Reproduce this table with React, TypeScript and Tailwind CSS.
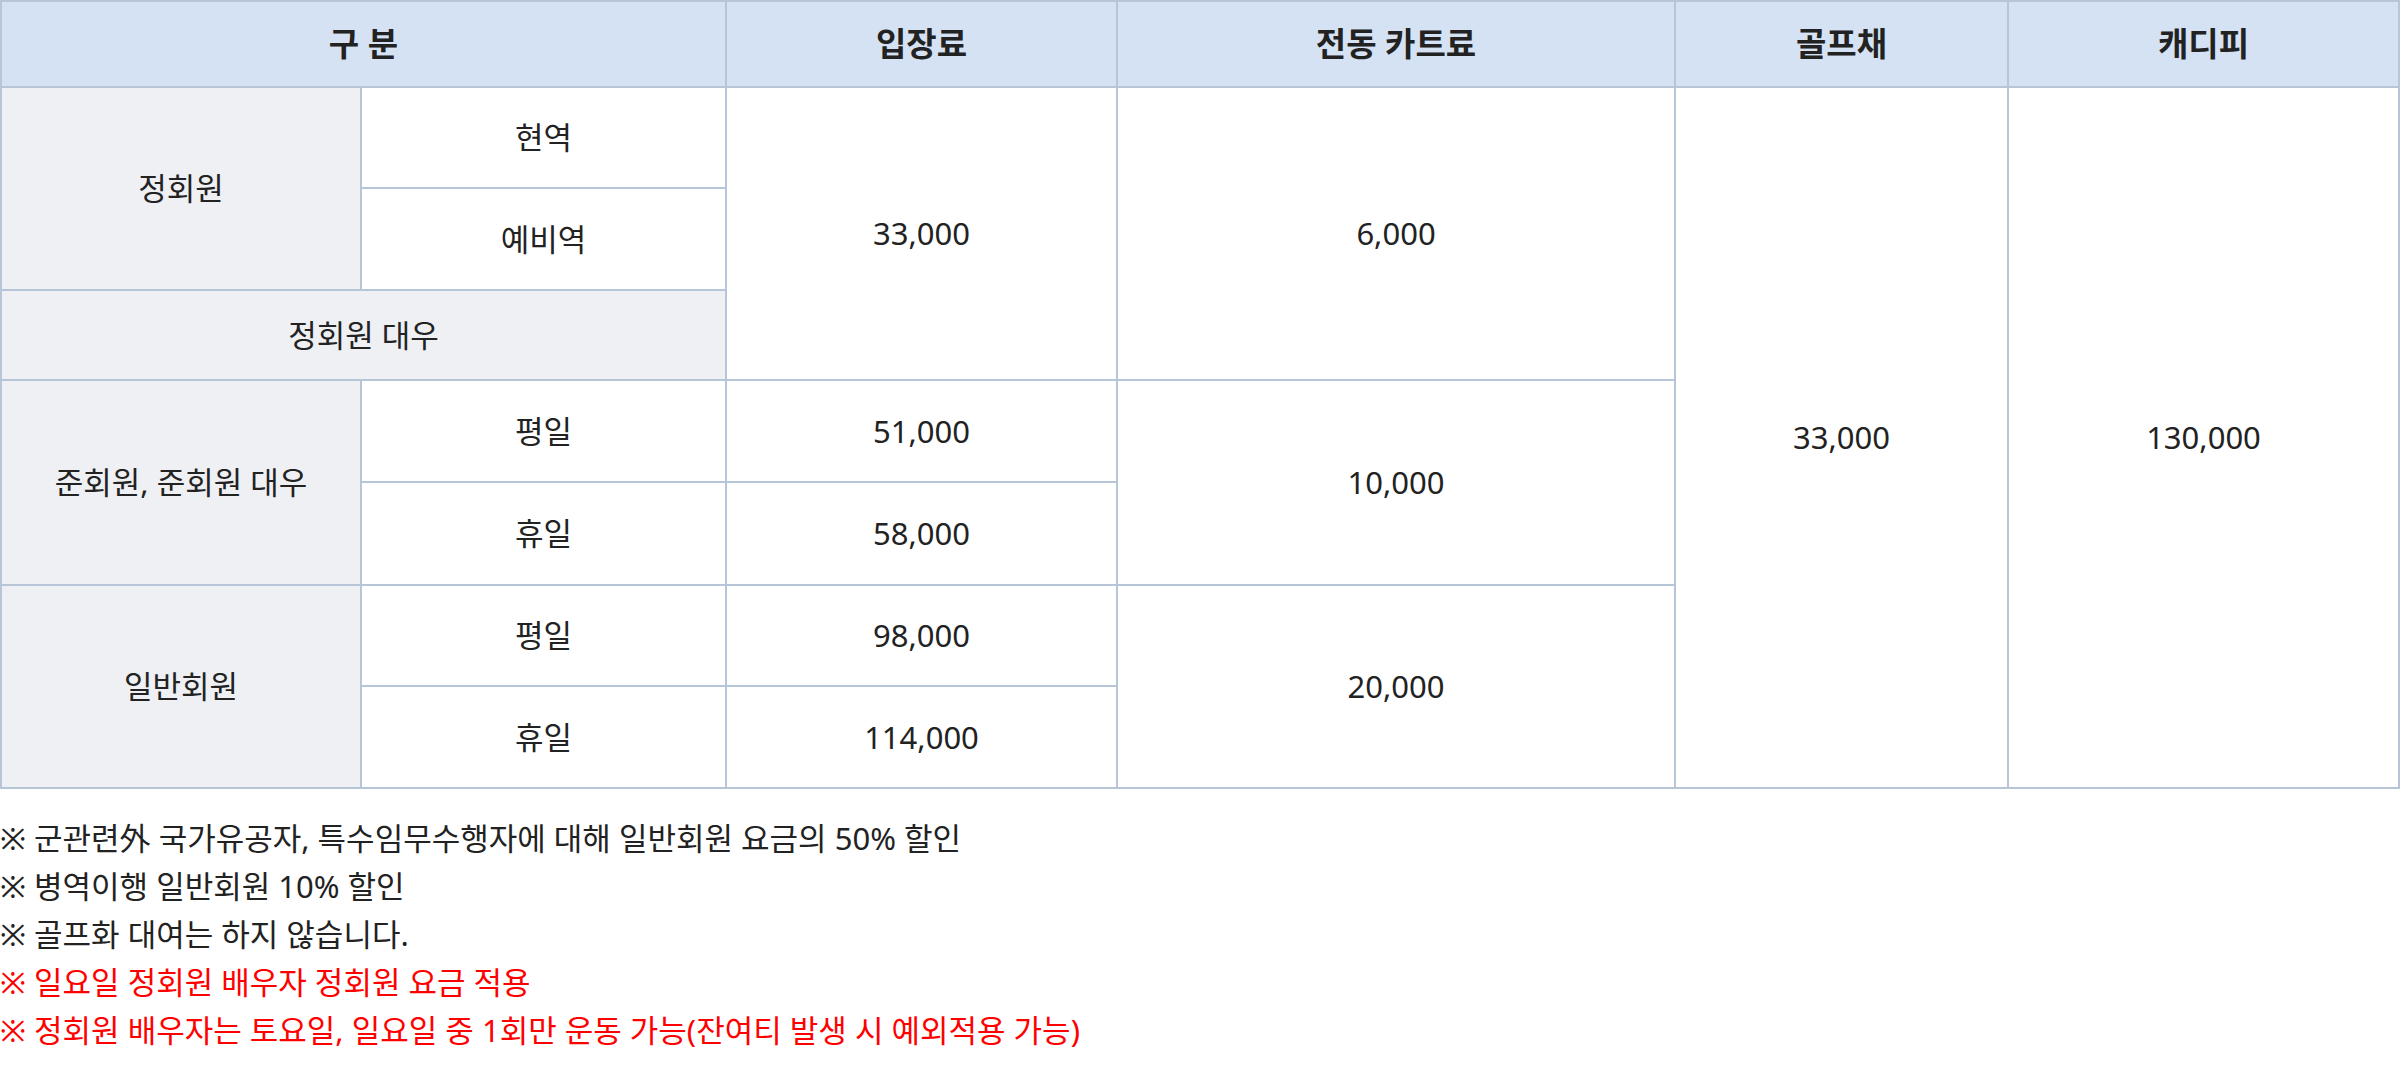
const font = "font-['Noto_Sans','Noto_Sans_CJK_KR',sans-serif]";

const th = "border-2 border-[#b6c5d8] bg-[#d5e2f3] text-[33px] font-bold text-[#222]";
const td = "border-2 border-[#b6c5d8] text-[31px] text-[#222] font-normal";
const gray = `${td} bg-[#eef0f4]`;
const white = `${td} bg-white`;

const notes = [
  { text: "※ 군관련外 국가유공자, 특수임무수행자에 대해 일반회원 요금의 50% 할인", red: false },
  { text: "※ 병역이행 일반회원 10% 할인", red: false },
  { text: "※ 골프화 대여는 하지 않습니다.", red: false },
  { text: "※ 일요일 정회원 배우자 정회원 요금 적용", red: true },
  { text: "※ 정회원 배우자는 토요일, 일요일 중 1회만 운동 가능(잔여티 발생 시 예외적용 가능)", red: true },
];

export default function App() {
  return (
    <div className={`${font} bg-white min-h-[1088px] w-[2408px]`}>
      <table className="w-[2398px] border-collapse table-fixed text-center">
        <colgroup>
          <col className="w-[360px]" />
          <col className="w-[365px]" />
          <col className="w-[391px]" />
          <col className="w-[558px]" />
          <col className="w-[333px]" />
          <col className="w-[391px]" />
        </colgroup>
        <thead>
          <tr className="h-[86px]">
            <th colSpan={2} className={th}>
              구 분
            </th>
            <th className={th}>입장료</th>
            <th className={th}>전동 카트료</th>
            <th className={th}>골프채</th>
            <th className={th}>캐디피</th>
          </tr>
        </thead>
        <tbody>
          <tr className="h-[101px]">
            <td rowSpan={2} className={gray}>
              정회원
            </td>
            <td className={white}>현역</td>
            <td rowSpan={3} className={white}>
              33,000
            </td>
            <td rowSpan={3} className={white}>
              6,000
            </td>
            <td rowSpan={7} className={white}>
              33,000
            </td>
            <td rowSpan={7} className={white}>
              130,000
            </td>
          </tr>
          <tr className="h-[102px]">
            <td className={white}>예비역</td>
          </tr>
          <tr className="h-[90px]">
            <td colSpan={2} className={gray}>
              정회원 대우
            </td>
          </tr>
          <tr className="h-[102px]">
            <td rowSpan={2} className={gray}>
              준회원, 준회원 대우
            </td>
            <td className={white}>평일</td>
            <td className={white}>51,000</td>
            <td rowSpan={2} className={white}>
              10,000
            </td>
          </tr>
          <tr className="h-[103px]">
            <td className={white}>휴일</td>
            <td className={white}>58,000</td>
          </tr>
          <tr className="h-[101px]">
            <td rowSpan={2} className={gray}>
              일반회원
            </td>
            <td className={white}>평일</td>
            <td className={white}>98,000</td>
            <td rowSpan={2} className={white}>
              20,000
            </td>
          </tr>
          <tr className="h-[102px]">
            <td className={white}>휴일</td>
            <td className={white}>114,000</td>
          </tr>
        </tbody>
      </table>

      <ul className="mt-[25px] text-[31px] leading-[48px]">
        {notes.map((n) => (
          <li key={n.text} className={n.red ? "text-[#ff0000]" : "text-[#222]"}>
            {n.text}
          </li>
        ))}
      </ul>
    </div>
  );
}
